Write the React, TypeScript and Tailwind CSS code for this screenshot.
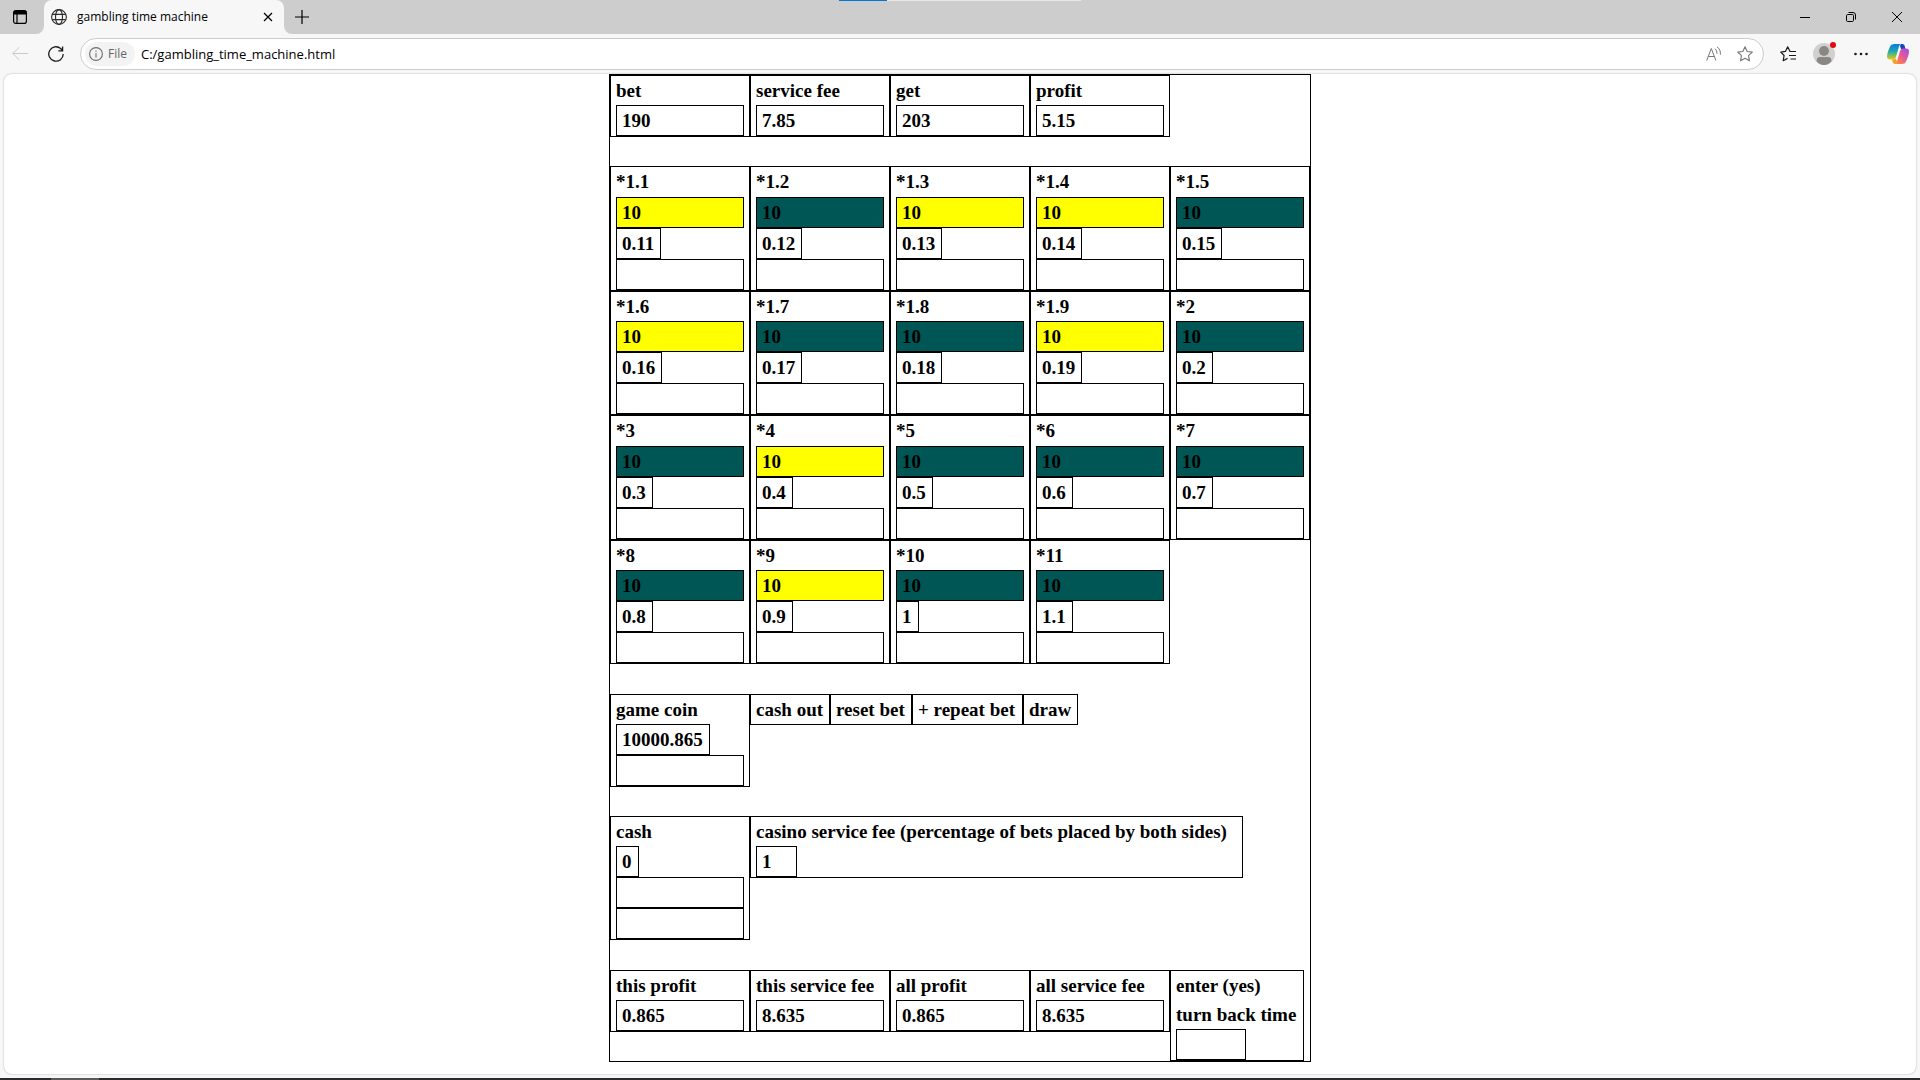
import React from 'react';

interface Bet {
  rate: string;
  fee: string;
  won: boolean;
}

const bets: Bet[] = [
  { rate: '*1.1', fee: '0.11', won: true },
  { rate: '*1.2', fee: '0.12', won: false },
  { rate: '*1.3', fee: '0.13', won: true },
  { rate: '*1.4', fee: '0.14', won: true },
  { rate: '*1.5', fee: '0.15', won: false },
  { rate: '*1.6', fee: '0.16', won: true },
  { rate: '*1.7', fee: '0.17', won: false },
  { rate: '*1.8', fee: '0.18', won: false },
  { rate: '*1.9', fee: '0.19', won: true },
  { rate: '*2', fee: '0.2', won: false },
  { rate: '*3', fee: '0.3', won: false },
  { rate: '*4', fee: '0.4', won: true },
  { rate: '*5', fee: '0.5', won: false },
  { rate: '*6', fee: '0.6', won: false },
  { rate: '*7', fee: '0.7', won: false },
  { rate: '*8', fee: '0.8', won: false },
  { rate: '*9', fee: '0.9', won: true },
  { rate: '*10', fee: '1', won: false },
  { rate: '*11', fee: '1.1', won: false },
];

const summary = [
  { label: 'bet', value: '190' },
  { label: 'service fee', value: '7.85' },
  { label: 'get', value: '203' },
  { label: 'profit', value: '5.15' },
];

const totals = [
  { label: 'this profit', value: '0.865' },
  { label: 'this service fee', value: '8.635' },
  { label: 'all profit', value: '0.865' },
  { label: 'all service fee', value: '8.635' },
];

const actions = [
  { label: 'cash out', width: 'w-20' },
  { label: 'reset bet', width: 'w-[82px]' },
  { label: '+ repeat bet', width: 'w-[111px]' },
  { label: 'draw', width: 'w-[55px]' },
];

const cell = 'flex w-[140px] flex-col items-start border border-black px-[5px]';
const field = 'h-[31px] w-full shrink-0 border border-black px-[5px] outline-none';
const chip = 'block h-[31px] shrink-0 border border-black pr-[6px] pl-[5px] text-left whitespace-nowrap';

const StatCell: React.FC<{ label: string; value: string }> = ({ label, value }) => (
  <div className={cell}>
    <label htmlFor={label.replace(/ /g, '-')}>{label}</label>
    <output id={label.replace(/ /g, '-')} className={`${chip} w-full`}>
      {value}
    </output>
  </div>
);

const BetCell: React.FC<{ bet: Bet }> = ({ bet }) => (
  <div className={cell}>
    <label htmlFor={`bet-${bet.rate}`} className="grow">
      {bet.rate}
    </label>
    <button
      type="button"
      className={
        bet.won
          ? 'block h-[31px] w-full shrink-0 border border-black bg-[#ffff00] px-[5px] text-left'
          : 'block h-[31px] w-full shrink-0 border border-black bg-[#005555] px-[5px] text-left'
      }
    >
      10
    </button>
    <output className={chip}>{bet.fee}</output>
    <input id={`bet-${bet.rate}`} type="text" className={field} />
  </div>
);

const TabStrip = () => (
  <header className="relative flex h-[34px] bg-[#cdcdcd] text-black">
    {/* window drag handle */}
    <div className="absolute inset-x-0 top-0 flex justify-center">
      <div className="h-px w-12 bg-[#0078d4]" />
      <div className="h-px w-[194px] bg-[#e6e6e6]" />
    </div>
    <div className="flex w-11 items-end justify-between">
      <button type="button" aria-label="Tab actions" className="flex h-full w-9 items-center justify-end pr-2">
        <svg className="h-4 w-4" viewBox="0 0 16 16" fill="none" stroke="currentColor" strokeWidth="1.2">
          <rect x="1.6" y="1.6" width="12.8" height="12.8" rx="2.2" />
          <path d="M2 3.5Q2 2 3.5 2h9Q14 2 14 3.5V5H2z" fill="currentColor" />
          <path d="M5 5v9.4" />
        </svg>
      </button>
      <svg className="h-2 w-2" viewBox="0 0 8 8" fill="#f7f7f7">
        <path d="M8 0v8H0A8 8 0 0 0 8 0z" />
      </svg>
    </div>
    <div className="flex w-60 items-center rounded-t-lg bg-[#f7f7f7] pr-1 pl-[7px]">
      <svg className="h-4 w-4 shrink-0" viewBox="0 0 16 16" fill="none" stroke="#2b2b2b" strokeWidth="1.1">
        <circle cx="8" cy="8" r="7.4" />
        <ellipse cx="8" cy="8" rx="3.5" ry="7.4" />
        <path d="M1.3 5.4h13.4M1.3 10.6h13.4" />
      </svg>
      <span className="ml-[10px] grow text-xs whitespace-nowrap">gambling time machine</span>
      <button type="button" aria-label="Close tab" className="flex h-6 w-6 items-center justify-center">
        <svg className="h-[10px] w-[10px]" viewBox="0 0 10 10" stroke="currentColor" strokeWidth="1.2">
          <path d="M1 1l8 8M9 1l-8 8" />
        </svg>
      </button>
    </div>
    <svg className="h-2 w-2 self-end" viewBox="0 0 8 8" fill="#f7f7f7">
      <path d="M0 0v8h8A8 8 0 0 1 0 0z" />
    </svg>
    <button type="button" aria-label="New tab" className="flex w-5 items-center justify-center">
      <svg className="h-[14px] w-[14px]" viewBox="0 0 14 14" stroke="currentColor" strokeWidth="1.2">
        <path d="M7 0v14M0 7h14" />
      </svg>
    </button>
    <div className="grow" />
    <button type="button" aria-label="Minimize" className="flex w-[46px] items-center justify-center">
      <svg className="h-[10px] w-[10px]" viewBox="0 0 10 10" stroke="currentColor">
        <path d="M0 5.5h10" />
      </svg>
    </button>
    <button type="button" aria-label="Restore" className="flex w-[46px] items-center justify-center">
      <svg className="h-[10px] w-[10px]" viewBox="0 0 10 10" fill="none" stroke="currentColor">
        <rect x="0.5" y="2.5" width="7" height="7" rx="1.2" />
        <path d="M2.5 0.5h4.5a2.5 2.5 0 0 1 2.5 2.5v4.5" />
      </svg>
    </button>
    <button type="button" aria-label="Close" className="flex w-[46px] items-center justify-center">
      <svg className="h-[10px] w-[10px]" viewBox="0 0 10 10" stroke="currentColor">
        <path d="M0 0l10 10M10 0L0 10" />
      </svg>
    </button>
  </header>
);

const CopilotLogo = () => (
  <svg className="h-[22px] w-[22px]" viewBox="0 0 22 22">
    <defs>
      <linearGradient id="cp-left" x1="0" y1="0" x2="0" y2="1">
        <stop offset="0" stopColor="#0c7ad8" />
        <stop offset="0.45" stopColor="#1aa6b4" />
        <stop offset="0.75" stopColor="#7dc254" />
        <stop offset="1" stopColor="#f2c51c" />
      </linearGradient>
      <linearGradient id="cp-right" x1="1" y1="0" x2="0.2" y2="1">
        <stop offset="0" stopColor="#9b4df0" />
        <stop offset="0.5" stopColor="#e5559c" />
        <stop offset="1" stopColor="#ff8a3d" />
      </linearGradient>
    </defs>
    <path d="M14 1h1.5q1.5 0 2 1.5L18.5 6H14l-1-3z" fill="#1547b8" />
    <path d="M7 1h7q-1.5.5-2 2.5L9 14q-.8 2.5-3 2.5H3Q0 16.500 0 13.500q0-2 1-5L3 3.500Q4 1 7 1z" fill="url(#cp-left)" />
    <path d="M5 16.500h1q2 0 2.500-1l2 3.500-2 2H8q-1.500 0-2-1.500z" fill="#f5a21c" />
    <path d="M15 21H8q1.500-.5 2-2.500L13 8q.8-2.500 3-2.500h3q3 0 3 3 0 2-1 5l-2 5q-1 2.500-4 2.500z" fill="url(#cp-right)" />
  </svg>
);

const Toolbar = () => (
  <div className="flex h-10 items-center bg-[#f7f7f7] pr-[11px] pl-3">
    <button type="button" aria-label="Back" className="flex w-4">
      <svg className="h-4 w-4" viewBox="0 0 16 16" fill="none" stroke="#c9c9c9">
        <path d="M16 7.500H.7M7.500 1L.7 7.500 7.500 14" />
      </svg>
    </button>
    <button type="button" aria-label="Refresh" className="ml-5 flex w-4">
      <svg className="h-4 w-4" viewBox="0 0 16 16" fill="none" stroke="#1a1a1a" strokeWidth="1.3">
        <path d="M15.200 8a7.200 7.200 0 1 1-2.600-5.550L14.500 4.500M14.600.5v4.300h-4.300" />
      </svg>
    </button>
    <div className="ml-4 flex h-8 grow items-center rounded-full border border-[#cccccc] bg-white pr-[10px] pl-1">
      <div className="flex h-6 items-center rounded-full bg-[#f3f3f3] pr-2 pl-1 text-xs text-[#666666]">
        <svg className="mr-[5px] h-[14px] w-[14px]" viewBox="0 0 14 14" fill="none" stroke="#6e6e6e" strokeWidth="1.1">
          <circle cx="7" cy="7" r="6.4" />
          <path d="M7 6v4.5M7 3.5v1.2" />
        </svg>
        File
      </div>
      <input
        type="text"
        aria-label="Address"
        defaultValue="C:/gambling_time_machine.html"
        className="ml-[6px] h-6 grow bg-transparent text-[13px] text-black outline-none"
      />
      <button type="button" aria-label="Read aloud" className="flex">
        <svg className="h-4 w-4" viewBox="0 0 16 16" fill="none" stroke="#767676">
          <path d="M.7 14.500L5.300 2.500l4.600 12M2.400 10.500h5.900" />
          <path d="M9.200 2.800q1.900 1.700 1.800 4.900M11 .8q3.800 2.600 3.400 7.900" />
        </svg>
      </button>
      <button type="button" aria-label="Add to favorites" className="ml-[15px] flex">
        <svg className="h-4 w-4" viewBox="0 0 16 16" fill="none" stroke="#767676" strokeWidth="1.1" strokeLinejoin="round">
          <path d="M8 .8l2.200 4.700 5.100.6-3.800 3.500 1 5.200L8 12.300l-4.500 2.500 1-5.200L.7 6.100l5.100-.6z" />
        </svg>
      </button>
    </div>
    <button type="button" aria-label="Favorites" className="ml-4 flex">
      <svg className="h-4 w-4" viewBox="0 0 16 16" fill="none" stroke="#1a1a1a" strokeWidth="1.2" strokeLinejoin="round">
        <path d="M10.700 5.500L10 5.400 7.700.8 5.400 5.400.8 6.100l3.300 3.400-.9 5.200 4.300-2.300M10.500 5.500H16M9 9.500h7M10.500 13H16" />
      </svg>
    </button>
    <button type="button" aria-label="Profile" className="relative ml-4 flex">
      <svg className="h-6 w-6" viewBox="0 0 24 24">
        <circle cx="12" cy="12" r="11" fill="#d2d0ce" />
        <circle cx="12" cy="9" r="5" fill="#8a8886" />
        <path d="M4.500 19q0-4 3.500-4h8q3.500 0 3.500 4-3 4-7.500 4t-7.500-4z" fill="#8a8886" />
      </svg>
      <span className="absolute top-0 right-0 h-[6px] w-[6px] rounded-full bg-[#e30613]" />
    </button>
    <button type="button" aria-label="Settings and more" className="ml-[17px] flex">
      <svg className="h-4 w-4" viewBox="0 0 16 16" fill="#1a1a1a">
        <circle cx="2.5" cy="8" r="1.3" />
        <circle cx="8" cy="8" r="1.3" />
        <circle cx="13.5" cy="8" r="1.3" />
      </svg>
    </button>
    <button type="button" aria-label="Copilot" className="ml-[18px] flex">
      <CopilotLogo />
    </button>
  </div>
);

const Game = () => (
  <main className="mx-auto flex w-[702px] flex-col border border-black font-['Liberation_Serif',serif] text-[19px] leading-[29px] font-bold text-black">
    <section className="flex">
      {summary.map((item) => (
        <StatCell key={item.label} label={item.label} value={item.value} />
      ))}
    </section>

    <section className="mt-[29px] grid min-h-[498px] auto-rows-fr grid-cols-[repeat(5,140px)]">
      {bets.map((bet) => (
        <BetCell key={bet.rate} bet={bet} />
      ))}
    </section>

    <section className="mt-[30px] flex items-start">
      <div className={cell}>
        <label htmlFor="game-coin">game coin</label>
        <output className={chip}>10000.865</output>
        <input id="game-coin" type="text" className={field} />
      </div>
      {actions.map((action) => (
        <button key={action.label} type="button" className={`${chip} ${action.width}`}>
          {action.label}
        </button>
      ))}
    </section>

    <section className="mt-[29px] flex items-start">
      <div className={cell}>
        <label htmlFor="cash">cash</label>
        <output className={chip}>0</output>
        <input id="cash" type="text" className={field} />
        <input type="text" aria-label="cash amount" className={field} />
      </div>
      <div className="flex w-[493px] flex-col items-start border border-black px-[5px]">
        <label htmlFor="casino-fee">casino service fee (percentage of bets placed by both sides)</label>
        <input
          id="casino-fee"
          type="text"
          defaultValue="1"
          className="h-[31px] w-[41px] border border-black px-[5px] outline-none"
        />
      </div>
    </section>

    <section className="mt-[30px] flex items-start">
      {totals.map((item) => (
        <StatCell key={item.label} label={item.label} value={item.value} />
      ))}
      <div className="flex w-[134px] flex-col items-start border border-black px-[5px]">
        <label htmlFor="turn-back">
          enter (yes)
          <br />
          turn back time
        </label>
        <input
          id="turn-back"
          type="text"
          className="h-[31px] w-[70px] border border-black px-[5px] outline-none"
        />
      </div>
    </section>
  </main>
);

const App = () => (
  <div className="flex min-h-screen flex-col bg-[#f7f7f7] font-['Open_Sans','Noto_Sans',sans-serif]">
    <TabStrip />
    <Toolbar />
    <div className="mx-1 mb-1 grow rounded-lg bg-white shadow-[0_0_2px_rgba(0,0,0,0.3)]">
      <Game />
    </div>
    <div className="flex h-[2px] bg-[#2b2b2f] pl-[51px]">
      <div className="w-12 bg-[#5a5a5a]" />
    </div>
  </div>
);

export default App;
